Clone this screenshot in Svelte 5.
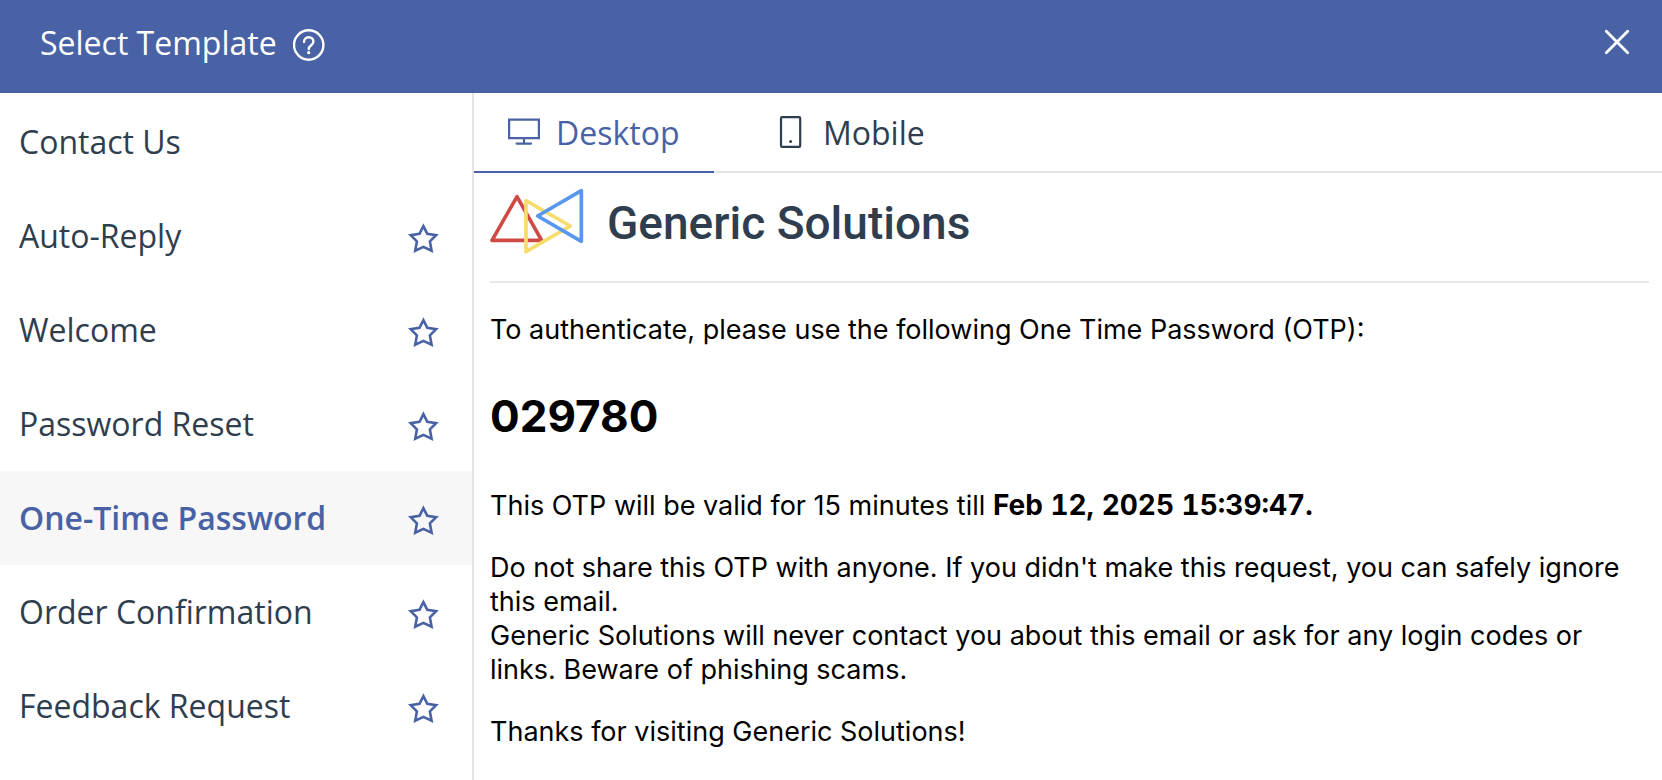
<script>
  const templates = [
    { name: 'Contact Us', star: false },
    { name: 'Auto-Reply', star: true },
    { name: 'Welcome', star: true },
    { name: 'Password Reset', star: true },
    { name: 'One-Time Password', star: true },
    { name: 'Order Confirmation', star: true },
    { name: 'Feedback Request', star: true },
  ];
  let selected = $state('One-Time Password');
  let view = $state('desktop');
</script>

<div class="dialog">
  <header>
    <h1>Select Template</h1>
    <button class="icon-button help" aria-label="Help">
      <svg width="32" height="32" viewBox="0 0 32 32" fill="none" stroke="currentColor" stroke-width="2.4">
        <circle cx="15.7" cy="16" r="14.7" />
        <path d="M11 12.9c0-2.8 1.9-4.7 4.7-4.7s4.7 1.8 4.7 4.3c0 3.9-4.6 3.7-4.6 7.6" stroke-width="2.4" stroke-linecap="round" />
        <circle cx="15.7" cy="23.7" r="1.6" fill="currentColor" stroke="none" />
      </svg>
    </button>
    <button class="icon-button close" aria-label="Close">
      <svg width="26" height="26" viewBox="0 0 26 26" fill="none" stroke="currentColor" stroke-width="2.8" stroke-linecap="round">
        <path d="M2.3 2.3l21.4 21.4M23.7 2.3L2.3 23.7" />
      </svg>
    </button>
  </header>

  <div class="body">
    <nav aria-label="Templates">
      <ul>
        {#each templates as t}
          <li class:selected={selected === t.name}>
            <button class="name" onclick={() => (selected = t.name)}>{t.name}</button>
            {#if t.star}
              <button class="icon-button star" aria-label="Favourite {t.name}">
                <svg width="32" height="32" viewBox="0 0 32 32" fill="none" stroke="currentColor" stroke-width="2.6">
                  <path d="M16.4 4.2L20.3 11.8L29.1 13.2L22.9 19.4L24.6 28.7L16.4 24.9L8.2 28.7L9.9 19.4L3.7 13.2L12.5 11.8Z" />
                </svg>
              </button>
            {/if}
          </li>
        {/each}
      </ul>
    </nav>

    <main>
      <div class="tabs" role="tablist">
        <button class="tab" class:active={view === 'desktop'} role="tab" aria-selected={view === 'desktop'} onclick={() => (view = 'desktop')}>
          <svg width="32" height="32" viewBox="0 0 32 32" fill="none" stroke="currentColor" stroke-width="2.2">
            <path d="M1.1 3.7h29.8v18.4H1.1zM16 22.5V28" />
            <path d="M8.6 27.6h14.4" stroke-linecap="round" />
          </svg>
          Desktop
        </button>
        <button class="tab" class:active={view === 'mobile'} role="tab" aria-selected={view === 'mobile'} onclick={() => (view = 'mobile')}>
          <svg width="32" height="32" viewBox="0 0 32 32" fill="none" stroke="currentColor" stroke-width="2.2">
            <rect x="6" y="1.1" width="19.2" height="29.8" rx="1.2" />
            <circle cx="15.6" cy="25.4" r="1.5" fill="currentColor" stroke="none" />
          </svg>
          Mobile
        </button>
      </div>

      <article>
        <div class="brand">
          <svg width="94" height="66" viewBox="60 294 282 198" fill="none" stroke-width="11" stroke-linejoin="round">
            <path d="M141 320L66 451H215Z" stroke="#d04a44" />
            <path d="M168 332V485L301 408Z" stroke="#f7dc6b" />
            <path d="M334 302V454L203 378Z" stroke="#5896f0" />
          </svg>
          <span>Generic Solutions</span>
        </div>
        <p>To authenticate, please use the following One Time Password (OTP):</p>
        <h2>029780</h2>
        <p>This OTP will be valid for 15 minutes till <strong>Feb 12, 2025 15:39:47.</strong></p>
        <p>
          Do not share this OTP with anyone. If you didn't make this request, you can safely ignore this email.<br />
          Generic Solutions will never contact you about this email or ask for any login codes or links. Beware of phishing scams.
        </p>
        <p>Thanks for visiting Generic Solutions!</p>
      </article>
    </main>
  </div>
</div>

<style>
  :global(body) {
    margin: 0;
    background: #fff;
  }
  .dialog {
    display: flex;
    flex-direction: column;
    min-height: 100vh;
    font-family: 'Open Sans', 'Noto Sans', sans-serif;
    font-size: 32px;
    color: #2f3e4f;
  }
  button {
    margin: 0;
    padding: 0;
    border: 0;
    background: none;
    font: inherit;
    color: inherit;
    cursor: pointer;
  }
  svg {
    display: block;
    flex: none;
  }
  header {
    display: flex;
    align-items: center;
    gap: 16px;
    height: 93px;
    box-sizing: border-box;
    padding: 0 32px 8px 40px;
    background: #4962a5;
    color: #fff;
  }
  h1 {
    margin: 0;
    font-size: 32px;
    font-weight: 400;
    line-height: 44px;
  }
  .help {
    padding-top: 4px;
  }
  .close {
    margin-left: auto;
    padding-bottom: 2px;
  }
  .body {
    display: flex;
    flex: 1;
  }
  nav {
    width: 472px;
    flex: none;
    border-right: 2px solid #e5e5e5;
  }
  ul {
    margin: 0;
    padding: 2px 0 0;
    list-style: none;
  }
  li {
    display: flex;
    align-items: center;
    height: 94px;
    padding-right: 33px;
  }
  li.selected {
    background: #f7f7f7;
    color: #4962a5;
    font-weight: 600;
  }
  .name {
    flex: 1;
    height: 94px;
    padding: 0 0 2px 19px;
    text-align: left;
  }
  .star {
    padding-top: 4px;
    color: #4962a5;
  }
  main {
    flex: 1;
    min-width: 0;
  }
  .tabs {
    display: flex;
    gap: 27px;
    height: 80px;
    box-sizing: border-box;
    border-bottom: 2px solid #e5e5e5;
  }
  .tab {
    display: flex;
    align-items: center;
    gap: 16px;
    height: 80px;
    min-width: 240px;
    box-sizing: border-box;
    padding: 0 34px;
    border-bottom: 2px solid transparent;
  }
  .tab.active {
    border-bottom-color: #4962a5;
    color: #4962a5;
  }
  article {
    padding: 15px 13px 24px 16px;
    font-family: Inter, 'Liberation Sans', sans-serif;
    font-size: 27px;
    line-height: 34px;
    color: #000;
  }
  .brand {
    display: flex;
    align-items: center;
    gap: 23px;
    margin-bottom: 30px;
    padding-bottom: 27px;
    border-bottom: 2px solid #e8e8e8;
    font-family: Roboto, 'Liberation Sans', sans-serif;
    font-size: 46px;
    font-weight: 500;
    line-height: 62px;
    color: #2f3e4f;
  }
  .brand span {
    padding-top: 4px;
  }
  p {
    margin: 0 0 28px;
  }
  strong {
    font-size: 28px;
    font-variant-numeric: tabular-nums;
  }
  h2 {
    margin: 44px 0 47px;
    font-size: 44px;
    font-weight: 700;
    line-height: 50px;
  }
</style>
